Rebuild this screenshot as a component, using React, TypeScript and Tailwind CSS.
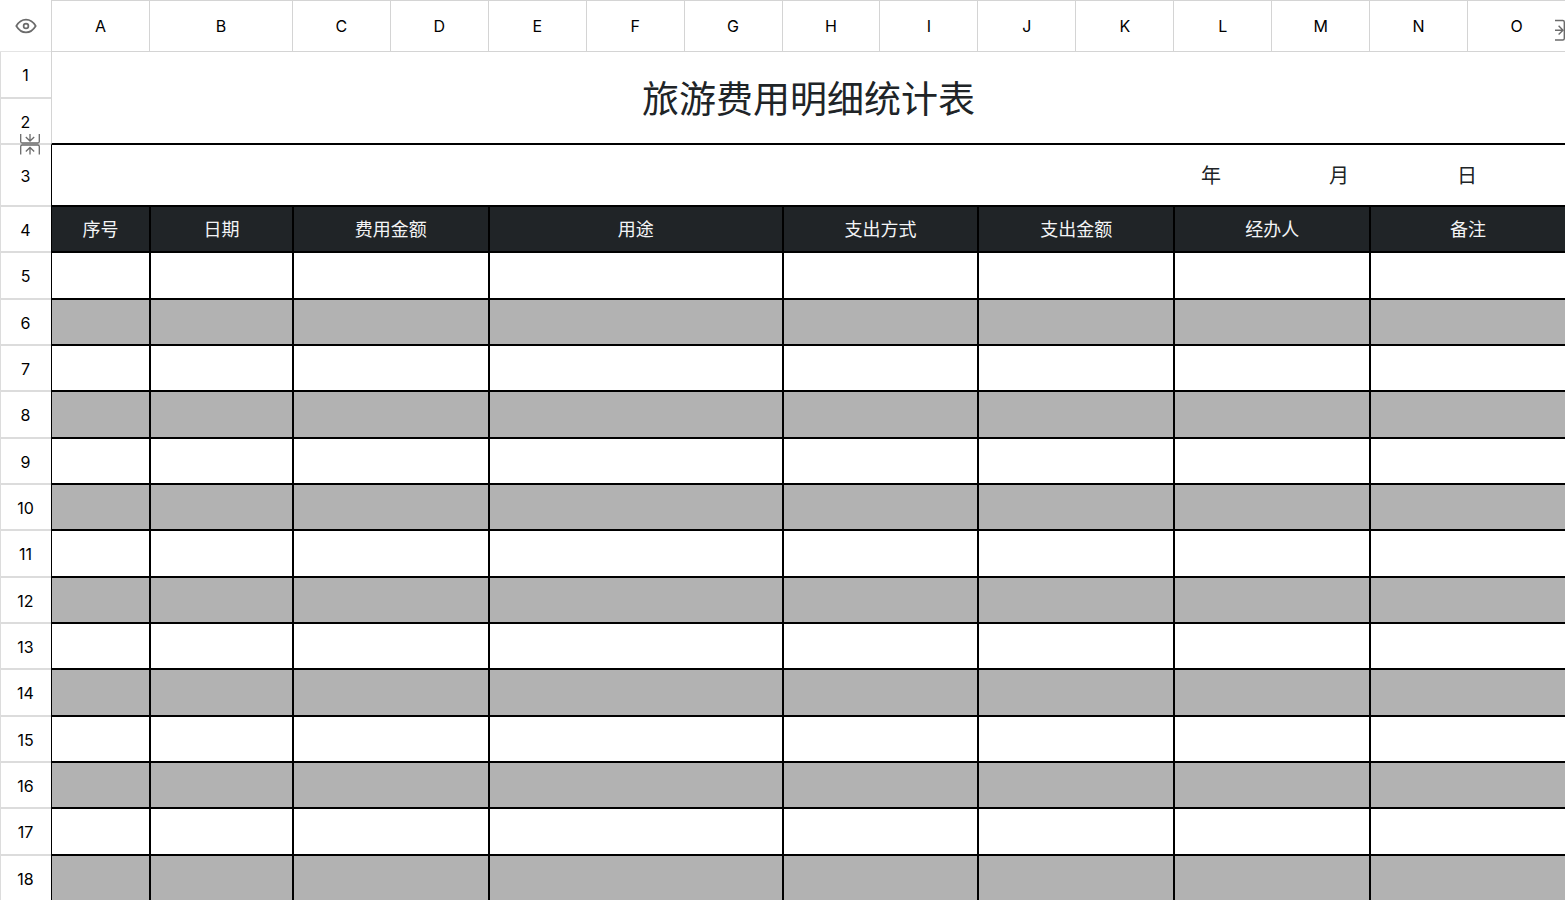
import React from 'react';

const COLUMNS = ['A', 'B', 'C', 'D', 'E', 'F', 'G', 'H', 'I', 'J', 'K', 'L', 'M', 'N', 'O'];

interface Field {
  label: string;
  span: number;
}

const FIELDS: Field[] = [
  { label: '序号', span: 1 },
  { label: '日期', span: 1 },
  { label: '费用金额', span: 2 },
  { label: '用途', span: 3 },
  { label: '支出方式', span: 2 },
  { label: '支出金额', span: 2 },
  { label: '经办人', span: 2 },
  { label: '备注', span: 2 },
];

const BODY_ROWS = Array.from({ length: 14 }, (_, i) => i + 5);

/** Row number in the left gutter */
function RowHead({ n, children }: { n: number; children?: React.ReactNode }) {
  return (
    <th
      scope="row"
      className="relative border-b-2 border-l border-[#dcdcdc] p-0 pt-px pr-px text-center text-base font-normal text-black"
    >
      {n}
      {children}
    </th>
  );
}

/** Fold marks on the border between rows 2 and 3 */
function RowFoldIcon() {
  return (
    <svg
      width="20"
      height="22"
      viewBox="0 0 20 22"
      fill="none"
      stroke="#6b6b6b"
      strokeWidth="1.3"
      className="absolute -bottom-3 left-[19px] z-10"
      aria-hidden="true"
    >
      <path d="M0.7 1V8.5Q0.7 10 2.2 10H17.8Q19.3 10 19.3 8.5V1" />
      <path d="M10 1V8M5.8 4L10 8L14.2 4" />
      <path d="M0.7 21.5V13.5Q0.7 12 2.2 12H17.8Q19.3 12 19.3 13.5V21.5" />
      <path d="M10 21.5V14.5M5.8 18.5L10 14.5L14.2 18.5" />
    </svg>
  );
}

function ColumnFoldIcon() {
  return (
    <svg
      width="10"
      height="22"
      viewBox="0 0 10 22"
      fill="none"
      stroke="#6b6b6b"
      strokeWidth="1.4"
      className="absolute top-[18px] right-0"
      aria-hidden="true"
    >
      <path d="M0 1.5H7.8Q9.3 1.5 9.3 3V19.5Q9.3 21 7.8 21H0" />
      <path d="M0 11.2H8M3.6 6.8L8 11.2L3.6 15.6" />
    </svg>
  );
}

export default function App() {
  return (
    <div className="h-screen overflow-hidden bg-white font-['Inter','Noto_Sans_CJK_SC',sans-serif] text-[#202427]">
      <table className="w-full table-fixed border-separate border-spacing-0">
        <colgroup>
          <col className="w-[51px]" />
          {COLUMNS.map((c) => (
            <col key={c} className={c === 'B' ? 'w-[143px]' : ''} />
          ))}
        </colgroup>
        <thead>
          <tr className="h-[52px]">
            <td className="border-b border-[#e4e4e4] p-0">
              <button type="button" aria-label="显示" className="flex w-full items-center justify-center">
                <svg width="22" height="16" viewBox="0 0 22 16" fill="none" stroke="#6b6b6b" strokeWidth="1.7">
                  <path d="M1.3 8C3.8 3.8 7.2 1.6 11 1.6S18.2 3.8 20.7 8C18.2 12.2 14.8 14.4 11 14.4S3.8 12.2 1.3 8Z" />
                  <circle cx="11" cy="8" r="2.4" />
                </svg>
              </button>
            </td>
            {COLUMNS.map((c) => (
              <th
                key={c}
                scope="col"
                className="relative border-t border-b border-l border-[#d4d4d4] p-0 text-center text-base font-normal text-black"
              >
                {c}
                {c === 'O' && <ColumnFoldIcon />}
              </th>
            ))}
          </tr>
        </thead>
        <tbody>
          <tr className="h-[47px]">
            <RowHead n={1} />
            <td
              colSpan={15}
              rowSpan={2}
              className="border-b-2 border-l border-b-black border-l-[#d4d4d4] p-0 pt-1 text-center text-[37px] leading-10"
            >
              旅游费用明细统计表
            </td>
          </tr>
          <tr className="h-[46px]">
            <RowHead n={2}>
              <RowFoldIcon />
            </RowHead>
          </tr>
          <tr className="h-[62px]">
            <RowHead n={3} />
            <td colSpan={15} className="border-b-2 border-l border-black p-0 pt-px pr-[88px] text-xl">
              <div className="flex justify-end gap-[108px]">
                <span>年</span>
                <span>月</span>
                <span>日</span>
              </div>
            </td>
          </tr>
          <tr className="h-[46px]">
            <RowHead n={4} />
            {FIELDS.map((f, i) => (
              <th
                key={f.label}
                scope="col"
                colSpan={f.span}
                className={`border-b-2 border-black bg-[#202427] p-0 pt-0.5 text-center text-lg font-normal text-gray-100 ${
                  i === 0 ? 'border-l' : 'border-l-2'
                }`}
              >
                {f.label}
              </th>
            ))}
          </tr>
          {BODY_ROWS.map((n, row) => (
            <tr key={n} className={row % 3 === 0 ? 'h-[47px]' : 'h-[46px]'}>
              <RowHead n={n} />
              {FIELDS.map((f, i) => (
                <td
                  key={f.label}
                  colSpan={f.span}
                  className={`border-b-2 border-black p-0 ${i === 0 ? 'border-l' : 'border-l-2'} ${
                    row % 2 === 1 ? 'bg-[#b2b2b2]' : 'bg-white'
                  }`}
                />
              ))}
            </tr>
          ))}
        </tbody>
      </table>
    </div>
  );
}
